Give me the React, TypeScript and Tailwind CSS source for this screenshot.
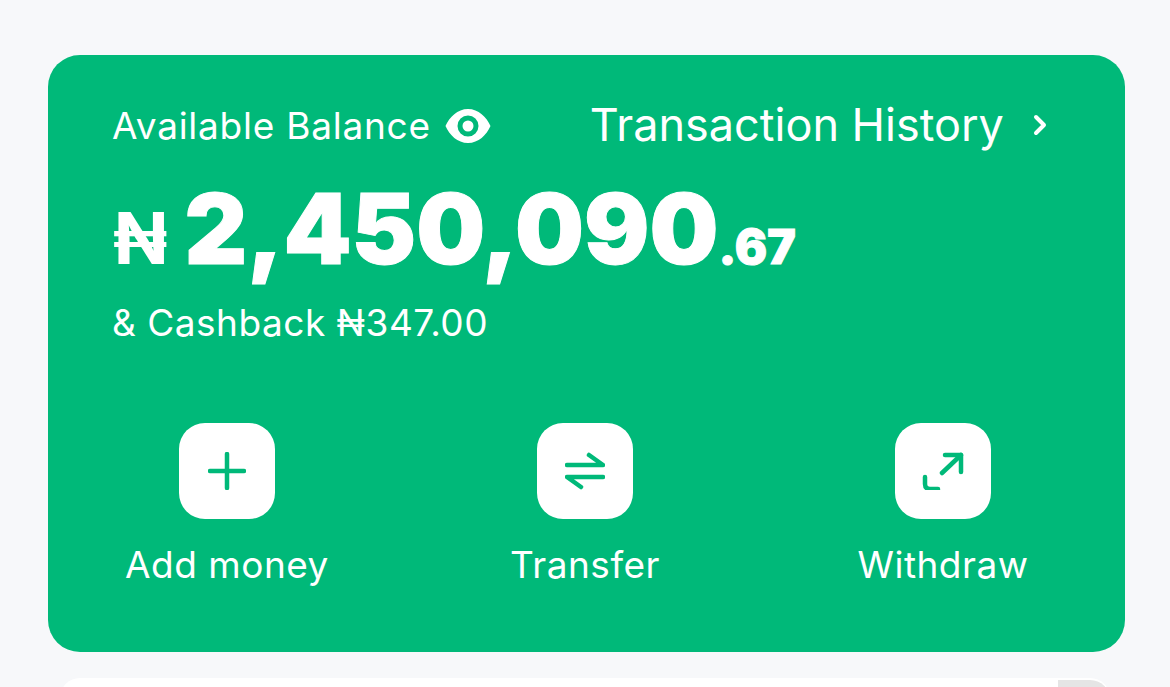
const GREEN = "#00b979";

function EyeIcon() {
  return (
    <svg viewBox="0 0 46 36" className="h-[36px] w-[46px]">
      <path
        fill="#fff"
        fillRule="evenodd"
        d="M23 1C12.5 1 4.5 9 0.5 18C4.5 27 12.5 35 23 35C33.5 35 41.5 27 45.5 18C41.5 9 33.5 1 23 1ZM23 7.5A10.5 10.5 0 1 1 23 28.5A10.5 10.5 0 1 1 23 7.5ZM23 12.5A5.5 5.5 0 1 0 23 23.5A5.5 5.5 0 1 0 23 12.5Z"
      />
    </svg>
  );
}

function PlusIcon() {
  return (
    <svg viewBox="0 0 38 38" fill="none" stroke={GREEN} strokeWidth="4.5" strokeLinecap="round" className="h-[38px] w-[38px]">
      <path d="M19 2V36M2 19H36" />
    </svg>
  );
}

function TransferIcon() {
  return (
    <svg viewBox="0 0 40 38" fill="none" stroke={GREEN} strokeWidth="4.5" strokeLinecap="round" strokeLinejoin="round" className="h-[38px] w-[40px]">
      <path d="M2 13H38L24 3" />
      <path d="M38 25H2L16 35" />
    </svg>
  );
}

function WithdrawIcon() {
  return (
    <svg viewBox="0 0 42 38" fill="none" stroke={GREEN} strokeWidth="4.5" strokeLinecap="round" strokeLinejoin="round" className="h-[38px] w-[42px]">
      <path d="M20 21L39 3" />
      <path d="M23 3H39V20" />
      <path d="M3 25V32Q3 37 8 37H16" />
    </svg>
  );
}

function Action({ label, icon }: { label: string; icon: React.ReactNode }) {
  return (
    <div className="flex w-[240px] flex-col items-center">
      <div className="flex h-[96px] w-[96px] items-center justify-center rounded-[26px] bg-white">{icon}</div>
      <span className="mt-[23px] text-[37px] leading-[46px] tracking-[0.5px] text-white">{label}</span>
    </div>
  );
}

export default function App() {
  return (
    <div className="h-[687px] w-[1170px] overflow-hidden bg-[#f7f8fa] pl-[48px] pt-[55px] font-['Inter','Noto_Sans',sans-serif]">
      <section className="flex h-[597px] w-[1077px] flex-col rounded-[32px] bg-[#00b979] pt-[48px] text-white">
        <div className="flex h-[46px] items-center pl-[64px]">
          <span className="text-[37px] leading-[46px] tracking-[0.75px]">Available Balance</span>
          <span className="ml-[14px]">
            <EyeIcon />
          </span>
          <span className="ml-[99px] mt-[-3px] text-[45px] leading-[46px]">Transaction History</span>
          <svg viewBox="0 0 14 22" fill="none" stroke="#fff" strokeWidth="4" strokeLinecap="round" strokeLinejoin="round" className="ml-[29px] mt-[-2px] h-[22px] w-[14px]">
            <path d="M3 3L11 11L3 19" />
          </svg>
        </div>
        <div className="mt-[35px] flex h-[90px] items-baseline pl-[65px]">
          <span className="text-[72px] font-bold leading-[90px]">₦</span>
          <span className="ml-[17px] text-[97px] font-black leading-[90px] [-webkit-text-stroke:1px_white]">2,450,090</span>
          <span className="text-[48px] font-black leading-[90px] [-webkit-text-stroke:1px_white]">.67</span>
        </div>
        <div className="mt-[26px] pl-[64px] text-[37px] leading-[46px] tracking-[0.5px]">& Cashback ₦347.00</div>
        <div className="mt-[77px] flex gap-[118px] pl-[59px]">
          <Action label="Add money" icon={<PlusIcon />} />
          <Action label="Transfer" icon={<TransferIcon />} />
          <Action label="Withdraw" icon={<WithdrawIcon />} />
        </div>
      </section>
      <div className="ml-[12px] mt-[26px] flex h-[40px] w-[1050px] justify-end overflow-hidden rounded-t-[20px] bg-white">
        <div className="mt-[2px] h-[40px] w-[52px] rounded-tr-[20px] bg-[#e5e5e5]" />
      </div>
    </div>
  );
}
